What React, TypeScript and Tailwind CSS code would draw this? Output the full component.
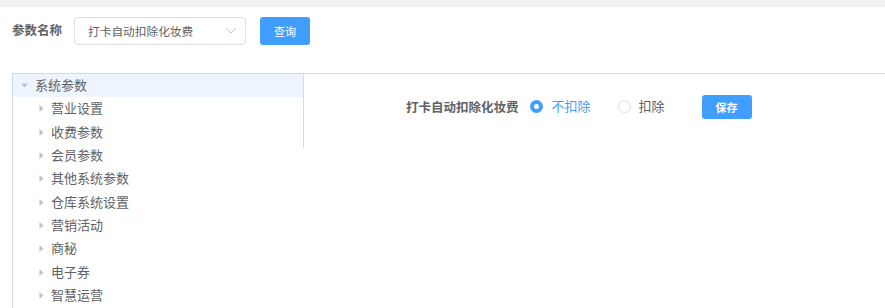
const font = { fontFamily: '"Noto Sans CJK SC", "Noto Sans", sans-serif' };

const children = [
  "营业设置",
  "收费参数",
  "会员参数",
  "其他系统参数",
  "仓库系统设置",
  "营销活动",
  "商秘",
  "电子券",
  "智慧运营",
];

function Caret({ open }: { open?: boolean }) {
  return open ? (
    <svg width="7" height="5" viewBox="0 0 7 5" className="shrink-0">
      <path d="M0 0.5 L7 0.5 L3.5 4.5 Z" fill="#c0c4cc" />
    </svg>
  ) : (
    <svg width="5" height="7" viewBox="0 0 5 7" className="shrink-0">
      <path d="M0.5 0 L4.5 3.5 L0.5 7 Z" fill="#c0c4cc" />
    </svg>
  );
}

export default function App() {
  return (
    <div
      className="w-[885px] h-[308px] bg-white overflow-hidden text-[#606266]"
      style={font}
    >
      {/* top strip */}
      <div className="h-[7px] bg-[#f0f0f0]" />

      {/* search bar */}
      <div className="flex items-center pl-[12px] pt-[10px] h-[38px]">
        <span className="text-[12.5px] font-bold w-[62px] mb-[1px]">参数名称</span>
        <div className="flex items-center justify-between w-[172px] h-[28px] border border-[#dcdfe6] rounded-[4px] pl-[13px] pr-[9px]">
          <span className="text-[11.7px] text-[#606266] mb-[1px]">打卡自动扣除化妆费</span>
          <svg width="10" height="6" viewBox="0 0 10 6">
            <path d="M0.5 0.5 L5 5 L9.5 0.5" fill="none" stroke="#c0c4cc" strokeWidth="1" />
          </svg>
        </div>
        <button className="ml-[14px] w-[50px] h-[28px] rounded-[3px] bg-[#409eff] text-white text-[11px]">
          查询
        </button>
      </div>

      {/* main area */}
      <div className="mt-[28px] ml-[12px] flex border-t border-l border-[#d1dbe5] h-[236px]">
        {/* tree */}
        <div className="w-[290px] shrink-0">
          <div className="flex items-center h-[23.33px] bg-[#eef5fe] pl-[8px] gap-[7px]">
            <Caret open />
            <span className="text-[13px] mb-[2px]">系统参数</span>
          </div>
          {children.map((c) => (
            <div key={c} className="flex items-center h-[23.33px] pl-[26px] gap-[7px]">
              <Caret />
              <span className="text-[13px] mb-[2px]">{c}</span>
            </div>
          ))}
        </div>

        {/* form panel */}
        <div className="flex-1 self-start h-[74px] border-l border-[#d1dbe5] pl-[102px] pt-[21px]">
          <div className="flex items-center h-[24px]">
            <span className="text-[12.5px] font-bold mt-[1px]">打卡自动扣除化妆费</span>
            <span className="ml-[11px] w-[13px] h-[13px] rounded-full bg-[#409eff] flex items-center justify-center mb-[2px]">
              <span className="w-[5px] h-[5px] rounded-full bg-white" />
            </span>
            <span className="ml-[9px] text-[13px] text-[#409eff] mb-[3px]">不扣除</span>
            <span className="ml-[27px] w-[13px] h-[13px] rounded-full border border-[#dcdfe6] bg-white mb-[2px]" />
            <span className="ml-[8px] text-[13px] mb-[3px]">扣除</span>
            <button className="ml-[37px] w-[50px] h-[24px] rounded-[3px] bg-[#409eff] text-white text-[11px] font-bold">
              保存
            </button>
          </div>
        </div>
      </div>
    </div>
  );
}
